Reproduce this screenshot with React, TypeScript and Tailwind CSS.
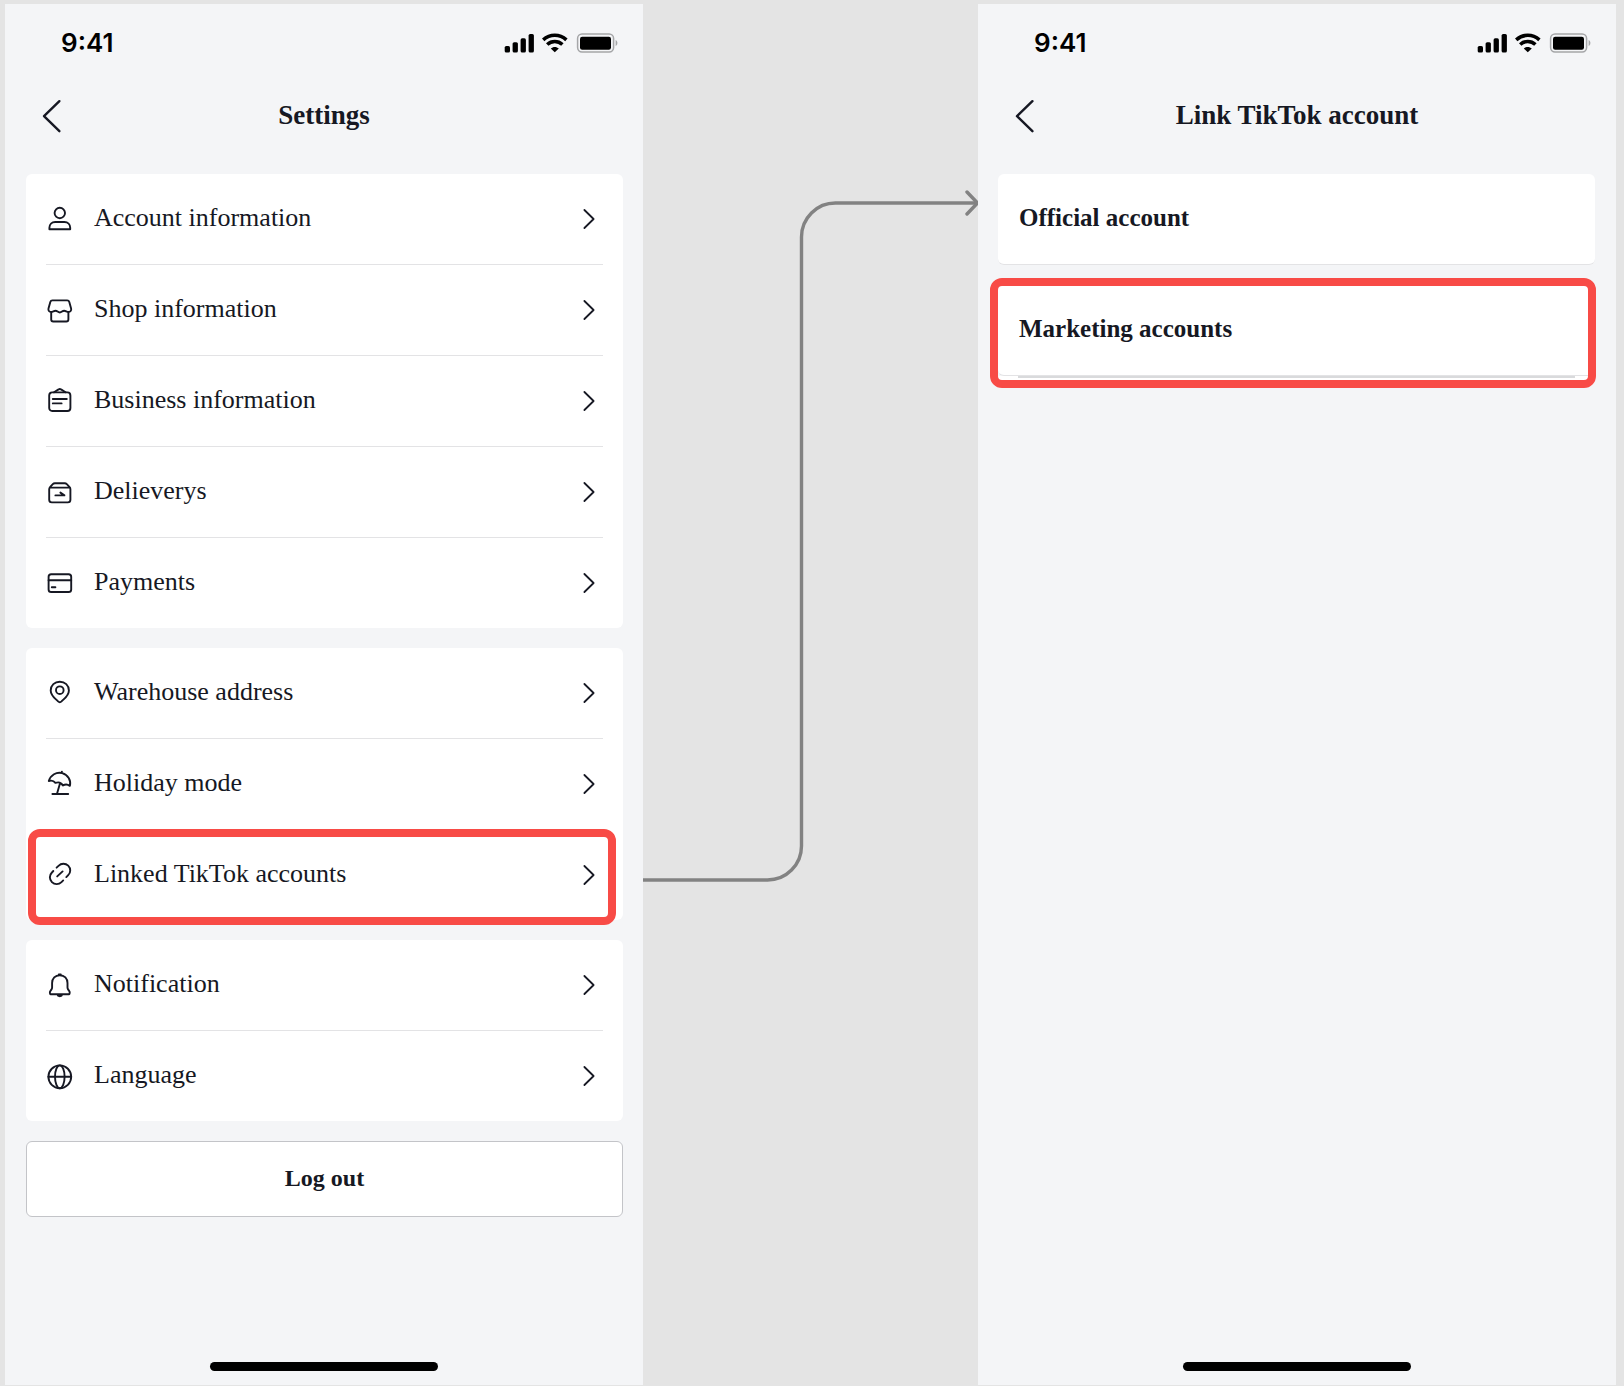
import type { ReactNode } from "react";

const icons: Record<string, ReactNode> = {
  user: (
    <>
      <circle cx="13.8" cy="8" r="5.2" />
      <path d="M3.4 24.2v-1.4c0-3.4 2.4-5.8 5.8-5.8h9.2c3.4 0 5.8 2.4 5.8 5.8v1.4z" />
    </>
  ),
  shop: (
    <>
      <path d="M6.4 4.4h14.8c1 0 1.8.6 2.1 1.6l1.8 6.5c.5 2.1-.7 3.4-2.7 3.4-1.8 0-2.5-1.2-4.3-1.2s-2.4 1.8-4.3 1.8-2.5-1.8-4.3-1.8-2.5 1.2-4.3 1.2c-2 0-3.2-1.3-2.7-3.4L4.3 6c.3-1 1.1-1.6 2.1-1.6z" />
      <path d="M5.2 16v7.4c0 1.2.9 2.1 2.1 2.1h13c1.2 0 2.1-.9 2.1-2.1V16" />
    </>
  ),
  business: (
    <>
      <rect x="3.2" y="5.4" width="21.2" height="18.6" rx="3" />
      <path d="M8 5.2l4.6-2.8c.7-.5 1.7-.5 2.4 0l4.6 2.8M6.8 12h14M6.8 16.4h8.8" />
    </>
  ),
  delivery: (
    <path d="M3.2 11.2c0-1 .3-1.6 1-2.3l2.6-2.7c.7-.7 1.2-.9 2.1-.9h9.8c.9 0 1.4.2 2.1.9l2.6 2.7c.7.7 1 1.3 1 2.3v10.6c0 1.600-1 2.600-2.600 2.600h-16c-1.600 0-2.600-1-2.600-2.600zM3.800 9.600h20M9.400 17.400h9l-4-2.800" />
  ),
  card: (
    <>
      <rect x="2.6" y="5.2" width="22.6" height="17.8" rx="2.6" />
      <path d="M2.6 11.2h22.6M5.8 18.2h3.6" />
    </>
  ),
  pin: (
    <>
      <path d="M13.8 23.2c-.6 0-1.2-.3-1.7-.8-2.4-2.6-7.4-5.6-7.4-11 0-5 4-8.7 9.1-8.7s9.1 3.7 9.1 8.7c0 5.4-5 8.4-7.4 11-.5.5-1.1.8-1.7.8z" />
      <circle cx="13.8" cy="11.2" r="3.8" />
    </>
  ),
  umbrella: (
    <path d="M2.8 11C4.6 5 10.4 1.6 16.2 3.1c5.8 1.6 9 7.2 7.7 12.8-2-1.6-4.6-2-7-.4-1.6-3-4.1-3.8-7.500-2.600-1.400-1.900-3.800-2.700-6.600-1.900zM15.900 1.600l-.4 1.300M13.900 13.800L11 23.800M6.400 24h15.800" />
  ),
  link: (
    <path d="M10.6 6.7l1.9-1.9c2.8-2.8 7-2.8 9.7-.1s2.7 6.8 0 9.5l-1.9 1.9M7.3 10l-1.4 1.5c-2.7 2.7-2.7 6.9 0 9.6s6.9 2.6 9.6 0l1.7-1.7M11.2 15.4l5.4-5" />
  ),
  bell: (
    <path d="M13.8 4.2c-4.6 0-7.7 3.4-7.7 7.8v4.6c0 .7-.2 1.2-.6 1.8l-1.4 2.1c-.4.7-.2 2.8.4 2.8h18.6c.6 0 .8-2.1.4-2.8l-1.4-2.1c-.4-.6-.6-1.1-.6-1.8V12c0-4.4-3.1-7.8-7.7-7.8zM12.8 3.4h2M11.4 23.6c.4 2.2 4.4 2.2 4.8 0" />
  ),
  globe: (
    <>
      <circle cx="13.8" cy="14.8" r="11.4" />
      <ellipse cx="13.8" cy="14.8" rx="4.8" ry="11.4" />
      <path d="M2.4 14.8h22.8" />
    </>
  ),
};

const groups = [
  [
    { icon: "user", label: "Account information" },
    { icon: "shop", label: "Shop information" },
    { icon: "business", label: "Business information" },
    { icon: "delivery", label: "Delieverys" },
    { icon: "card", label: "Payments" },
  ],
  [
    { icon: "pin", label: "Warehouse address" },
    { icon: "umbrella", label: "Holiday mode" },
    { icon: "link", label: "Linked TikTok accounts", highlight: true },
  ],
  [
    { icon: "bell", label: "Notification" },
    { icon: "globe", label: "Language" },
  ],
];

const StatusBar = () => (
  <div className="flex h-[78px] items-center justify-between pl-14 pr-[25px] text-black">
    <span className="font-['Inter',sans-serif] text-[26px] leading-8 font-semibold">9:41</span>
    <svg className="h-5 w-[114px]" viewBox="0 0 114 20" aria-hidden="true">
      <rect x="0.7" y="13" width="5.3" height="6.5" rx="1.6" />
      <rect x="8.6" y="9.2" width="5.3" height="10.3" rx="1.6" />
      <rect x="16.6" y="5.3" width="5.3" height="14.2" rx="1.6" />
      <rect x="24.6" y="1" width="5.3" height="18.5" rx="1.6" />
      <g fill="none" stroke="#000" strokeWidth="3.6">
        <path d="M39.2 6.8c6.8-6 16.4-6 23.2 0" />
        <path d="M43.2 11.5c4.4-4 10.8-4 15.2 0" />
      </g>
      <path d="M46.8 15.6c2.2-2.2 5.8-2.2 8 0l-4 3.7z" />
      <rect x="73.6" y="1" width="36" height="18" rx="4.4" fill="none" stroke="#a5a6a8" strokeWidth="1.5" />
      <rect x="76" y="3.8" width="31" height="13" rx="2.2" />
      <path d="M111.6 7v6c2.4-1 2.4-5 0-6z" fill="#a5a6a8" />
    </svg>
  </div>
);

const Screen = ({ title, children }: { title: string; children: ReactNode }) => (
  <section className="flex min-w-0 flex-col bg-[#f4f5f7]">
    <StatusBar />
    <header className="grid h-[66px] grid-cols-[60px_1fr_60px] items-center">
      <button type="button" aria-label="Back" className="flex justify-end pr-[3px]">
        <svg className="h-9 w-5" viewBox="0 0 20 36" fill="none" stroke="currentColor" strokeWidth="2.4" strokeLinecap="round" strokeLinejoin="round">
          <path d="M17.4 4.2L2 19.200l15.400 15" />
        </svg>
      </button>
      <h1 className="text-center text-[27px] leading-8 font-bold">{title}</h1>
    </header>
    <div className="mt-[26px] flex flex-col">{children}</div>
    <div className="mx-auto mt-auto mb-3.5 h-[9px] w-[228px] rounded-full bg-black" />
  </section>
);

type RowProps = { icon: string; label: string; highlight?: boolean };

const Row = ({ icon, label, highlight }: RowProps) => (
  <li className="group relative px-5">
    <button type="button" className="flex w-full items-center border-b border-[#e3e3e5] pr-2 text-left group-last:border-b-0">
      <svg className="size-7 shrink-0" viewBox="0 0 28 28" fill="none" stroke="currentColor" strokeWidth="1.9" strokeLinecap="round" strokeLinejoin="round" aria-hidden="true">
        {icons[icon]}
      </svg>
      <span className="ml-5 flex-1 pt-[26px] pb-7 text-[26px] leading-9">{label}</span>
      <svg className="h-6 w-3.5" viewBox="0 0 14 24" fill="none" stroke="currentColor" strokeWidth="1.8" strokeLinecap="round" strokeLinejoin="round" aria-hidden="true">
        <path d="M3.4 3l9.2 9-9.2 9" />
      </svg>
    </button>
    {highlight && (
      <div className="pointer-events-none absolute -top-px right-[7px] -bottom-[5px] left-0.5 rounded-xl border-8 border-[#f84b46]" />
    )}
  </li>
);

const AccountCard = ({ label }: { label: string }) => (
  <button type="button" className="block w-full rounded-md border-b border-[#e3e3e5] bg-white px-[21px] pt-[26px] pb-7 text-left text-[25px] leading-9 font-bold">
    {label}
  </button>
);

const Connector = () => (
  <svg className="w-full" viewBox="0 0 335 1380" fill="none" stroke="#828282" strokeWidth="3.4" aria-hidden="true">
    <path d="M0 876h124.5a34 34 0 0 0 34-34V233a34 34 0 0 1 34-34H334" />
    <path d="M324 188l10.5 11-10.5 11" strokeLinecap="round" strokeLinejoin="round" />
  </svg>
);

const App = () => {
  return (
    <main className="grid min-h-screen grid-cols-[638fr_335fr_638fr] bg-[#e4e4e4] pt-1 pr-2 pb-px pl-[5px] font-['Liberation_Serif',serif] text-[#161823]">
      <Screen title="Settings">
        <div className="flex flex-col gap-5 pr-5 pl-[21px]">
          {groups.map((rows, i) => (
            <ul key={i} className="rounded-md bg-white">
              {rows.map((row) => (
                <Row key={row.label} {...row} />
              ))}
            </ul>
          ))}
          <button type="button" className="rounded-md border border-[#c3c4c8] bg-white pt-[18px] pb-5 text-2xl leading-9 font-bold">
            Log out
          </button>
        </div>
      </Screen>

      <Connector />

      <Screen title="Link TikTok account">
        <div className="flex flex-col gap-5 pr-[21px] pl-5">
          <AccountCard label="Official account" />
          <div className="relative">
            <AccountCard label="Marketing accounts" />
            <div className="h-1 bg-white px-5">
              <div className="h-0.5 bg-[#d9dadc]" />
            </div>
            <div className="pointer-events-none absolute -top-[7px] -right-px -bottom-2 -left-2 rounded-xl border-8 border-[#f84b46]" />
          </div>
        </div>
      </Screen>
    </main>
  );
};

export default App;
